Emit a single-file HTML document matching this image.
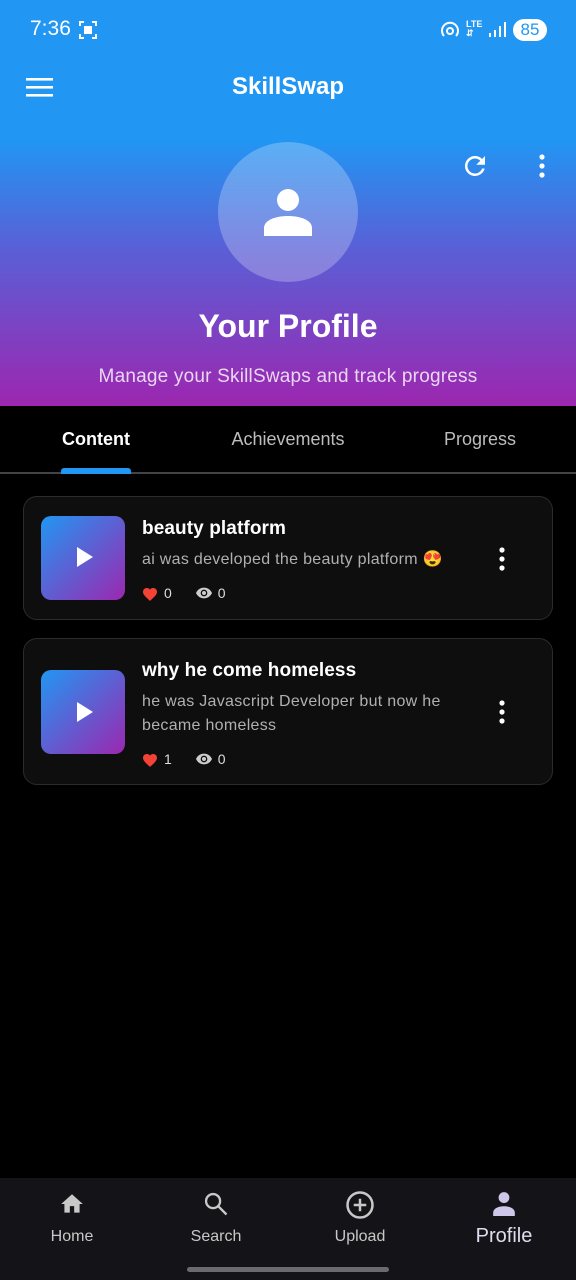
<!DOCTYPE html>
<html><head><meta charset="utf-8"><style>
*{margin:0;padding:0;box-sizing:border-box}
body{width:576px;height:1280px;background:#000;font-family:"Liberation Sans",sans-serif;position:relative;overflow:hidden;color:#fff}
.a{position:absolute}
.hdr{left:0;top:0;width:576px;height:406px;background:linear-gradient(180deg,#2196F3 0px,#2196F3 140px,#5a5fd6 250px,#9C27B0 406px)}
.card{left:23px;width:530px;background:#0e0e0e;border:1px solid #2c2c2c;border-radius:14px}
.thumb{left:17px;width:84px;height:84px;border-radius:10px;background:linear-gradient(135deg,#2196F3,#9C27B0)}
.t{left:118px;font-size:19px;font-weight:bold;letter-spacing:0.1px}
.d{left:118px;font-size:16px;color:#b0b0b0;line-height:24px;letter-spacing:0.3px}
.nav{font-size:16px;color:#c8c8c8;text-align:center;width:144px}
.st{left:118px;font-size:14px;color:#ddd;display:flex;align-items:center;gap:6px}
</style></head><body>
<div class="a hdr"></div>
<div class="a" style="left:30px;top:17px;font-size:21px">7:36</div>
<svg class="a" style="left:78px;top:20px" width="20" height="20" viewBox="0 0 20 20" fill="none" stroke="#fff" stroke-width="2"><path d="M2 6V2h4M14 2h4v4M18 14v4h-4M6 18H2v-4"/><rect x="6" y="6" width="8" height="8" fill="#fff" stroke="none"/></svg>
<svg class="a" style="left:440px;top:21px" width="20" height="20" viewBox="0 0 20 20" fill="none" stroke="#fff" stroke-width="2"><circle cx="10" cy="10" r="3"/><path d="M4 15a8 8 0 1 1 12 0"/></svg>
<div class="a" style="left:466px;top:20px;font-size:9px;line-height:9px;font-weight:bold">LTE<br>⇵</div>
<svg class="a" style="left:488px;top:22px" width="18" height="16"><rect x="1" y="11" width="2" height="4" fill="#fff"/><rect x="6" y="8" width="2" height="7" fill="#fff"/><rect x="11" y="4" width="2" height="11" fill="#fff"/><rect x="16" y="0" width="2" height="15" fill="#fff"/></svg>
<div class="a" style="left:513px;top:19px;width:34px;height:22px;border-radius:11px;background:#fff;color:#2196F3;font-size:17px;text-align:center;line-height:22px">85</div>
<svg class="a" style="left:26px;top:78px" width="27" height="19"><rect y="0" width="27" height="2.6" fill="#fff"/><rect y="8" width="27" height="2.6" fill="#fff"/><rect y="16" width="27" height="2.6" fill="#fff"/></svg>
<div class="a" style="left:0;width:576px;top:73px;text-align:center;font-size:24px;font-weight:bold">SkillSwap</div>
<svg class="a" style="left:460px;top:151px" width="30" height="30" viewBox="0 0 24 24"><path fill="#fff" d="M17.65 6.35A7.96 7.96 0 0 0 12 4a8 8 0 1 0 7.73 10h-2.08A6 6 0 1 1 12 6c1.66 0 3.14.69 4.22 1.78L13 11h7V4l-2.35 2.35z"/></svg>
<svg class="a" style="left:538px;top:154px" width="8" height="24"><circle cx="4" cy="3" r="2.6" fill="#fff"/><circle cx="4" cy="12" r="2.6" fill="#fff"/><circle cx="4" cy="21" r="2.6" fill="#fff"/></svg>
<div class="a" style="left:218px;top:142px;width:140px;height:140px;border-radius:50%;background:rgba(255,255,255,0.25)"></div>
<svg class="a" style="left:264px;top:188px" width="48" height="48" viewBox="0 0 48 48"><circle cx="24" cy="12" r="11" fill="#fff"/><path d="M0 48V40c0-8 12-12 24-12s24 4 24 12v8z" fill="#fff"/></svg>
<div class="a" style="left:0;width:576px;top:308px;text-align:center;font-size:32px;font-weight:bold">Your Profile</div>
<div class="a" style="left:0;width:576px;top:366px;text-align:center;font-size:19px;color:#ead6f2;letter-spacing:0.2px">Manage your SkillSwaps and track progress</div>
<div class="a" style="left:0;width:192px;top:429px;text-align:center;font-size:18px;font-weight:bold">Content</div>
<div class="a" style="left:192px;width:192px;top:429px;text-align:center;font-size:18px;color:#bdbdbd">Achievements</div>
<div class="a" style="left:384px;width:192px;top:429px;text-align:center;font-size:18px;color:#bdbdbd">Progress</div>
<div class="a" style="left:0;top:472px;width:576px;height:2px;background:#444"></div>
<div class="a" style="left:61px;top:468px;width:70px;height:6px;border-radius:3px 3px 0 0;background:#2196F3"></div>

<div class="a card" style="top:496px;height:124px">
 <div class="a thumb" style="top:19px"></div>
 <div class="a" style="left:53px;top:50px;width:0;height:0;border-left:16px solid #fff;border-top:10px solid transparent;border-bottom:10px solid transparent"></div>
 <div class="a t" style="top:21px">beauty platform</div>
 <div class="a d" style="top:51px">ai was developed the beauty platform 😍</div>
 <div class="a st" style="top:88px"><svg width="16" height="15" viewBox="0 0 24 22"><path fill="#f44336" d="M12 22l-1.5-1.3C5 15.7 1.5 12.6 1.5 8.6 1.5 5.3 4 2.8 7.3 2.8c1.8 0 3.6.9 4.7 2.2 1.1-1.3 2.9-2.2 4.7-2.2 3.3 0 5.8 2.5 5.8 5.8 0 4-3.5 7.1-9 12.1z"/></svg>0<span style="width:12px"></span><svg width="16" height="12" viewBox="0 0 24 16"><path fill="#ccc" d="M12 0C6.5 0 2 3.4 0 8c2 4.6 6.5 8 12 8s10-3.4 12-8C22 3.4 17.5 0 12 0zm0 13a5 5 0 1 1 0-10 5 5 0 0 1 0 10zm0-8a3 3 0 1 0 0 6 3 3 0 0 0 0-6z"/></svg>0</div>
 <svg class="a" style="left:474px;top:50px" width="8" height="24"><circle cx="4" cy="3" r="2.6" fill="#fff"/><circle cx="4" cy="12" r="2.6" fill="#fff"/><circle cx="4" cy="21" r="2.6" fill="#fff"/></svg>
</div>
<div class="a card" style="top:638px;height:147px">
 <div class="a thumb" style="top:31px"></div>
 <div class="a" style="left:53px;top:63px;width:0;height:0;border-left:16px solid #fff;border-top:10px solid transparent;border-bottom:10px solid transparent"></div>
 <div class="a t" style="top:21px">why he come homeless</div>
 <div class="a d" style="top:51px">he was Javascript Developer but now he<br>became homeless</div>
 <div class="a st" style="top:112px"><svg width="16" height="15" viewBox="0 0 24 22"><path fill="#f44336" d="M12 22l-1.5-1.3C5 15.7 1.5 12.6 1.5 8.6 1.5 5.3 4 2.8 7.3 2.8c1.8 0 3.6.9 4.7 2.2 1.1-1.3 2.9-2.2 4.7-2.2 3.3 0 5.8 2.5 5.8 5.8 0 4-3.5 7.1-9 12.1z"/></svg>1<span style="width:12px"></span><svg width="16" height="12" viewBox="0 0 24 16"><path fill="#ccc" d="M12 0C6.5 0 2 3.4 0 8c2 4.6 6.5 8 12 8s10-3.4 12-8C22 3.4 17.5 0 12 0zm0 13a5 5 0 1 1 0-10 5 5 0 0 1 0 10zm0-8a3 3 0 1 0 0 6 3 3 0 0 0 0-6z"/></svg>0</div>
 <svg class="a" style="left:474px;top:61px" width="8" height="24"><circle cx="4" cy="3" r="2.6" fill="#fff"/><circle cx="4" cy="12" r="2.6" fill="#fff"/><circle cx="4" cy="21" r="2.6" fill="#fff"/></svg>
</div>

<div class="a" style="left:0;top:1178px;width:576px;height:102px;background:#141317"></div>
<svg class="a" style="left:58px;top:1191px" width="28" height="26" viewBox="0 0 24 24"><path fill="#c8c8c8" d="M10 20v-6h4v6h5v-8h3L12 3 2 12h3v8z"/></svg>
<svg class="a" style="left:202px;top:1190px" width="28" height="28" viewBox="0 0 24 24" fill="none" stroke="#c8c8c8" stroke-width="2"><circle cx="9.5" cy="9.5" r="6"/><path d="M14 14l7 7"/></svg>
<svg class="a" style="left:345px;top:1190px" width="30" height="30" viewBox="0 0 24 24" fill="none" stroke="#c8c8c8" stroke-width="2"><circle cx="12" cy="12" r="10"/><path d="M12 7v10M7 12h10"/></svg>
<svg class="a" style="left:491px;top:1190px" width="26" height="26" viewBox="0 0 24 24"><circle cx="12" cy="7" r="5" fill="#cfc7ea"/><path d="M2 24v-3c0-4 5-6 10-6s10 2 10 6v3z" fill="#cfc7ea"/></svg>
<div class="a nav" style="left:0;top:1228px">Home</div>
<div class="a nav" style="left:144px;top:1228px">Search</div>
<div class="a nav" style="left:288px;top:1228px">Upload</div>
<div class="a nav" style="left:432px;top:1225px;font-size:20px;color:#e0dcee">Profile</div>
<div class="a" style="left:187px;top:1267px;width:202px;height:5px;border-radius:3px;background:#6b6b6f"></div>
</body></html>
